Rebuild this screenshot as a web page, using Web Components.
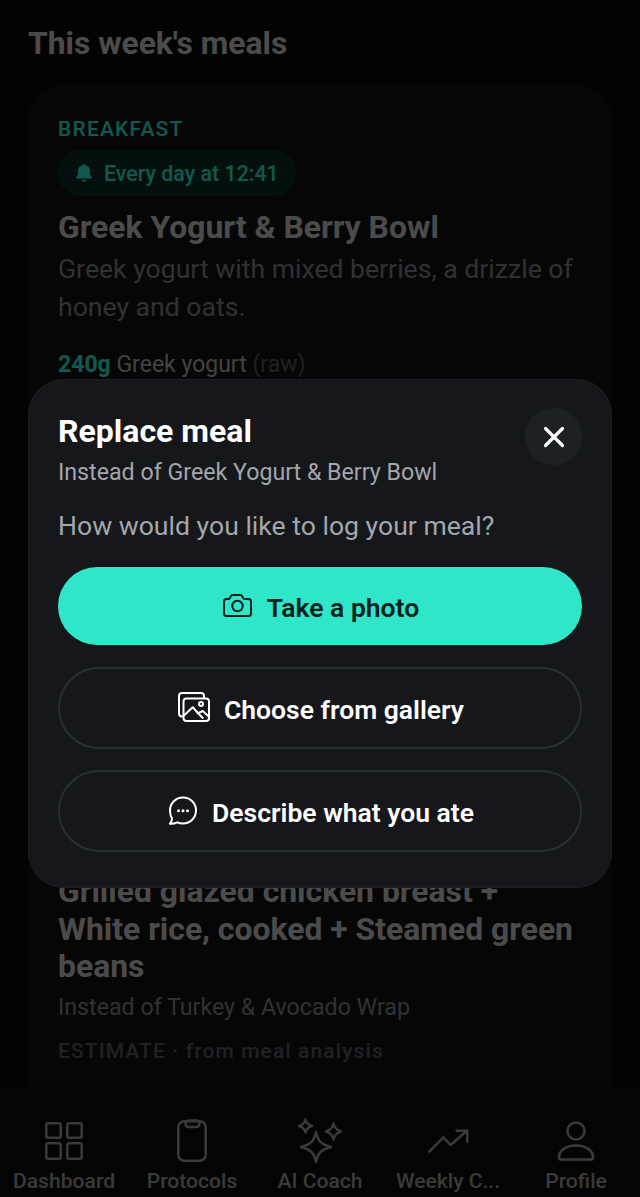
<!DOCTYPE html>
<html lang="en">
<head>
<meta charset="utf-8">
<title>This week's meals</title>
<style>
html, body { margin: 0; padding: 0; background: #030303; }
body { font-family: Roboto, "Liberation Sans", sans-serif; }
</style>
</head>
<body>
<app-screen>
  <meal-list>
    <meal-card>
      <span slot="slot-label">BREAKFAST</span>
      <meal-pill slot="pill">Every day at 12:41</meal-pill>
      <span slot="title">Greek Yogurt &amp; Berry Bowl</span>
      <span slot="desc">Greek yogurt with mixed berries, a drizzle of honey and oats.</span>
      <span slot="ingredient"><b>240g</b> Greek yogurt <i>(raw)</i></span>
    </meal-card>
    <meal-entry>
      <span slot="title">Grilled glazed chicken breast + White rice, cooked + Steamed green beans</span>
      <span slot="sub">Instead of Turkey &amp; Avocado Wrap</span>
      <span slot="note">ESTIMATE · from meal analysis</span>
    </meal-entry>
  </meal-list>
  <bottom-nav slot="nav">
    <nav-item icon="dashboard">Dashboard</nav-item>
    <nav-item icon="protocols">Protocols</nav-item>
    <nav-item icon="coach">AI Coach</nav-item>
    <nav-item icon="weekly">Weekly C...</nav-item>
    <nav-item icon="profile">Profile</nav-item>
  </bottom-nav>
  <replace-sheet slot="sheet">
    <sheet-button primary icon="camera">Take a photo</sheet-button>
    <sheet-button icon="gallery">Choose from gallery</sheet-button>
    <sheet-button icon="chat">Describe what you ate</sheet-button>
  </replace-sheet>
</app-screen>

<script>
const ICONS = {
  dashboard: '<rect x="6.250" y="5.250" width="14.500" height="14.500" rx="2"/><rect x="27.250" y="5.250" width="14.500" height="14.500" rx="2"/><rect x="6.250" y="25.250" width="14.500" height="15.500" rx="2"/><rect x="27.250" y="25.250" width="14.500" height="15.500" rx="2"/>',
  protocols: '<rect x="10.250" y="3.250" width="27.500" height="39.500" rx="6"/><rect x="17.500" y="2.500" width="14" height="6.500" rx="3"/>',
  coach: '<path d="M20 14c1.800 8.500 4.500 12 15 15-10.500 3-13.200 6.500-15 15-1.800-8.500-4.500-12-15-15 10.500-3 13.200-6.500 15-15z"/><path d="M9.500 1.500c.8 3.500 2 5.200 6.500 6.500-4.500 1.300-5.700 3-6.500 6.500-.8-3.500-2-5.200-6.500-6.500 4.500-1.300 5.700-3 6.500-6.500z"/><path d="M37.500 5.500c.9 4.200 2.400 6.300 7.500 8-5.100 1.700-6.600 3.800-7.500 8-.9-4.200-2.400-6.300-7.500-8 5.100-1.700 6.600-3.800 7.500-8z"/>',
  weekly: '<path d="M5.300 33.700l14-14.400 7.300 7.700 16.400-14.300"/><path d="M32.600 12.700h10.700v11"/>',
  profile: '<circle cx="24" cy="13" r="8.500"/><path d="M7 39.500c0-7 7-12 17-12s17 5 17 12c0 1.200-.8 2-2 2H9c-1.200 0-2-.8-2-2z"/>',
  camera: '<path d="M1 11.500c0-1.400 1-2.500 2.500-2.500h2.700l1.800-3c.3-.6.9-1 1.600-1h7.800c.7 0 1.300.4 1.600 1l1.800 3h4.700c1.500 0 2.500 1.100 2.500 2.500v12c0 1.400-1 2.500-2.500 2.500h-22c-1.500 0-2.500-1.100-2.500-2.500z"/><circle cx="14.500" cy="16" r="5.200"/>',
  gallery: '<path d="M4 24.500c-2 0-3-1.500-3-3V4c0-1.700 1.300-3 3-3h19c1.700 0 3 1.300 3 3v2"/><rect x="5.500" y="6.500" width="25.500" height="22.500" rx="3"/><circle cx="23" cy="12" r="2"/><path d="M5.700 23.700l9-8.400 10 10.700"/><path d="M19.700 21.300l5-2.300 6.300 5.700"/>',
  chat: '<path d="M15 2.500c7.200 0 13 5.700 13 13s-5.800 13-13 13c-2 0-3.900-.4-5.600-1.200-2 1-4.800 1.700-7.500 1.500 1.300-1.400 2-3.100 2.100-5.200C2.700 21.300 2 18.500 2 15.500 2 8.200 7.800 2.500 15 2.500z"/><g fill="currentColor" stroke="none"><circle cx="10.500" cy="15.700" r="1.500"/><circle cx="15" cy="15.700" r="1.500"/><circle cx="19.500" cy="15.700" r="1.500"/></g>'
}

const appScreenTemplate = document.createElement('template')
appScreenTemplate.innerHTML = `
<style>
:host {
  display: block;
  position: relative;
  width: 640px;
  height: 1197px;
  overflow: hidden;
  background: #080808;
}
.frame {
  display: flex;
  flex-direction: column;
  height: 100%;
}
.content {
  flex: 1;
  min-height: 0;
  overflow: hidden;
}
.scrim {
  position: absolute;
  inset: 0;
  background: rgba(0, 0, 0, 0.62);
}
</style>
<div class="frame">
  <div class="content"><slot></slot></div>
  <slot name="nav"></slot>
</div>
<div class="scrim"></div>
<slot name="sheet"></slot>
`

class AppScreen extends HTMLElement {
  constructor() {
    super()
    this.attachShadow({ mode: 'open' }).appendChild(appScreenTemplate.content.cloneNode(true))
  }
}

const mealListTemplate = document.createElement('template')
mealListTemplate.innerHTML = `
<style>
:host { display: block; padding: 25px 28px 0; }
h2 {
  margin: 0 0 23px;
  font-size: 31.800px;
  line-height: 36px;
  font-weight: 700;
  color: #c6c6c6;
}
.card {
  background: #121214;
  border-radius: 36px;
  padding: 33px 30px 0;
  height: 1100px;
  box-sizing: border-box;
}
</style>
<h2>This week's meals</h2>
<div class="card"><slot></slot></div>
`

class MealList extends HTMLElement {
  constructor() {
    super()
    this.attachShadow({ mode: 'open' }).appendChild(mealListTemplate.content.cloneNode(true))
  }
}

const mealCardTemplate = document.createElement('template')
mealCardTemplate.innerHTML = `
<style>
:host { display: block; height: 756px; }
.label {
  font-size: 21px;
  line-height: 24px;
  font-weight: 500;
  letter-spacing: 1.200px;
  color: #30e6c8;
}
.pill-row { margin-top: 9px; display: flex; }
.title {
  margin-top: 12px;
  font-size: 31.900px;
  line-height: 38px;
  font-weight: 700;
  color: #c6c6c6;
}
.desc {
  margin-top: 4px;
  font-size: 26.600px;
  line-height: 38px;
  color: #7f8186;
}
.ingredient {
  margin-top: 24px;
  font-size: 23px;
  line-height: 30px;
  color: #b0b0b0;
}
</style>
<div class="label"><slot name="slot-label"></slot></div>
<div class="pill-row"><slot name="pill"></slot></div>
<div class="title"><slot name="title"></slot></div>
<div class="desc"><slot name="desc"></slot></div>
<div class="ingredient"><slot name="ingredient"></slot></div>
`

class MealCard extends HTMLElement {
  constructor() {
    super()
    this.attachShadow({ mode: 'open' }).appendChild(mealCardTemplate.content.cloneNode(true))
    // the grams stay accent colored, the (raw) part is faded
    this.querySelectorAll('b').forEach(el => { el.style.color = '#30e6c8'; el.style.fontWeight = '700' })
    this.querySelectorAll('i').forEach(el => { el.style.color = '#55575a'; el.style.fontStyle = 'normal' })
  }
}

const mealPillTemplate = document.createElement('template')
mealPillTemplate.innerHTML = `
<style>
:host {
  display: inline-flex;
  align-items: center;
  gap: 11px;
  height: 46px;
  padding: 0 17px 0 17px;
  border-radius: 23px;
  background: #0d2a27;
  color: #30e6c8;
  font-size: 21.400px;
  font-weight: 500;
}
svg { width: 18px; height: 20px; }
</style>
<svg viewBox="0 0 18 20" fill="currentColor">
  <path d="M9 1c.8 0 1.300.6 1.300 1.300 3 .6 4.700 3 4.700 6v3.200l2 3v1H1v-1l2-3V8.300c0-3 1.700-5.400 4.700-6C7.700 1.600 8.200 1 9 1z"/>
  <path d="M6.700 16.800h4.600c-.2 1.200-1.100 2-2.300 2s-2.100-.8-2.300-2z"/>
</svg>
<slot></slot>
`

class MealPill extends HTMLElement {
  constructor() {
    super()
    this.attachShadow({ mode: 'open' }).appendChild(mealPillTemplate.content.cloneNode(true))
  }
}

const mealEntryTemplate = document.createElement('template')
mealEntryTemplate.innerHTML = `
<style>
:host { display: block; }
.title {
  font-size: 31.900px;
  line-height: 37.500px;
  font-weight: 700;
  color: #c6c6c6;
}
.sub {
  margin-top: 6px;
  font-size: 23.200px;
  line-height: 30px;
  color: #7f8186;
}
.note {
  margin-top: 16px;
  font-size: 21px;
  line-height: 26px;
  font-weight: 500;
  letter-spacing: 1.100px;
  color: #55575a;
}
</style>
<div class="title"><slot name="title"></slot></div>
<div class="sub"><slot name="sub"></slot></div>
<div class="note"><slot name="note"></slot></div>
`

class MealEntry extends HTMLElement {
  constructor() {
    super()
    this.attachShadow({ mode: 'open' }).appendChild(mealEntryTemplate.content.cloneNode(true))
  }
}

const bottomNavTemplate = document.createElement('template')
bottomNavTemplate.innerHTML = `
<style>
:host {
  display: grid;
  grid-template-columns: repeat(5, 1fr);
  height: 110px;
  background: #0d0d0d;
  position: relative;
}
</style>
<slot></slot>
`

class BottomNav extends HTMLElement {
  constructor() {
    super()
    this.attachShadow({ mode: 'open' }).appendChild(bottomNavTemplate.content.cloneNode(true))
  }
}

const navItemTemplate = document.createElement('template')
navItemTemplate.innerHTML = `
<style>
:host {
  display: flex;
  flex-direction: column;
  align-items: center;
  padding-top: 31px;
  color: #9a9a9a;
  font-size: 21.100px;
  font-weight: 500;
  line-height: 26px;
  white-space: nowrap;
}
svg {
  display: block;
  width: 48px;
  height: 44px;
  margin-bottom: 6px;
  overflow: visible;
  fill: none;
  stroke: currentColor;
  stroke-width: 2.500;
  stroke-linecap: round;
  stroke-linejoin: round;
}
</style>
<svg viewBox="0 0 48 44"></svg>
<span><slot></slot></span>
`

class NavItem extends HTMLElement {
  constructor() {
    super()
    this.attachShadow({ mode: 'open' }).appendChild(navItemTemplate.content.cloneNode(true))
  }
  connectedCallback() {
    this.shadowRoot.querySelector('svg').innerHTML = ICONS[this.getAttribute('icon')]
  }
}

const replaceSheetTemplate = document.createElement('template')
replaceSheetTemplate.innerHTML = `
<style>
:host {
  display: block;
  position: absolute;
  left: 28px;
  right: 28px;
  top: 379px;
  height: 509px;
  box-sizing: border-box;
  padding: 30px 30px 0;
  background: #15171b;
  border-radius: 36px;
  box-shadow: inset 0 0 0 1px #1b1d21;
}
.head {
  display: flex;
  justify-content: space-between;
  align-items: flex-start;
}
h2 {
  margin: 0;
  font-size: 32px;
  line-height: 44px;
  font-weight: 700;
  color: #ffffff;
}
.sub {
  margin-top: 4px;
  font-size: 23.200px;
  line-height: 30px;
  color: #a3a6ab;
}
button {
  width: 57px;
  height: 57px;
  margin: -1px 0 0;
  padding: 0;
  border: 0;
  border-radius: 50%;
  background: #1d2024;
  display: flex;
  align-items: center;
  justify-content: center;
}
button svg { width: 24px; height: 24px; stroke: #fff; stroke-width: 3.200; stroke-linecap: round; fill: none; }
.question {
  margin-top: 21px;
  font-size: 26.600px;
  line-height: 36px;
  color: #a3a6ab;
}
.actions {
  margin-top: 23px;
  display: flex;
  flex-direction: column;
  gap: 21px;
}
</style>
<div class="head">
  <div>
    <h2>Replace meal</h2>
    <div class="sub">Instead of Greek Yogurt &amp; Berry Bowl</div>
  </div>
  <button aria-label="Close"><svg viewBox="0 0 24 24"><path d="M3.500 3.500l17 17M20.500 3.500l-17 17"/></svg></button>
</div>
<div class="question">How would you like to log your meal?</div>
<div class="actions"><slot></slot></div>
`

class ReplaceSheet extends HTMLElement {
  constructor() {
    super()
    this.attachShadow({ mode: 'open' }).appendChild(replaceSheetTemplate.content.cloneNode(true))
  }
}

const sheetButtonTemplate = document.createElement('template')
sheetButtonTemplate.innerHTML = `
<style>
:host {
  display: flex;
  align-items: center;
  justify-content: center;
  gap: 14px;
  height: 82px;
  box-sizing: border-box;
  padding-left: 2px;
  border: 2px solid #2b2e33;
  border-radius: 41px;
  color: #ffffff;
  font-size: 26.500px;
  font-weight: 600;
}
:host([primary]) {
  height: 78px;
  margin-bottom: 1px;
  border: 0;
  background: #30e6c8;
  color: #07211d;
}
span { padding-top: 2px; }
svg {
  display: block;
  width: 30px;
  height: 32px;
  fill: none;
  stroke: currentColor;
  stroke-width: 2;
  stroke-linecap: round;
  stroke-linejoin: round;
}
:host([icon="gallery"]) svg { width: 32px; }
</style>
<svg></svg>
<span><slot></slot></span>
`

class SheetButton extends HTMLElement {
  constructor() {
    super()
    this.attachShadow({ mode: 'open' }).appendChild(sheetButtonTemplate.content.cloneNode(true))
  }
  connectedCallback() {
    const icon = this.getAttribute('icon')
    const svg = this.shadowRoot.querySelector('svg')
    svg.setAttribute('viewBox', icon === 'gallery' ? '0 0 32 32' : '0 0 30 32')
    svg.innerHTML = ICONS[icon]
  }
}

customElements.define('app-screen', AppScreen)
customElements.define('meal-list', MealList)
customElements.define('meal-card', MealCard)
customElements.define('meal-pill', MealPill)
customElements.define('meal-entry', MealEntry)
customElements.define('bottom-nav', BottomNav)
customElements.define('nav-item', NavItem)
customElements.define('replace-sheet', ReplaceSheet)
customElements.define('sheet-button', SheetButton)
</script>
</body>
</html>
